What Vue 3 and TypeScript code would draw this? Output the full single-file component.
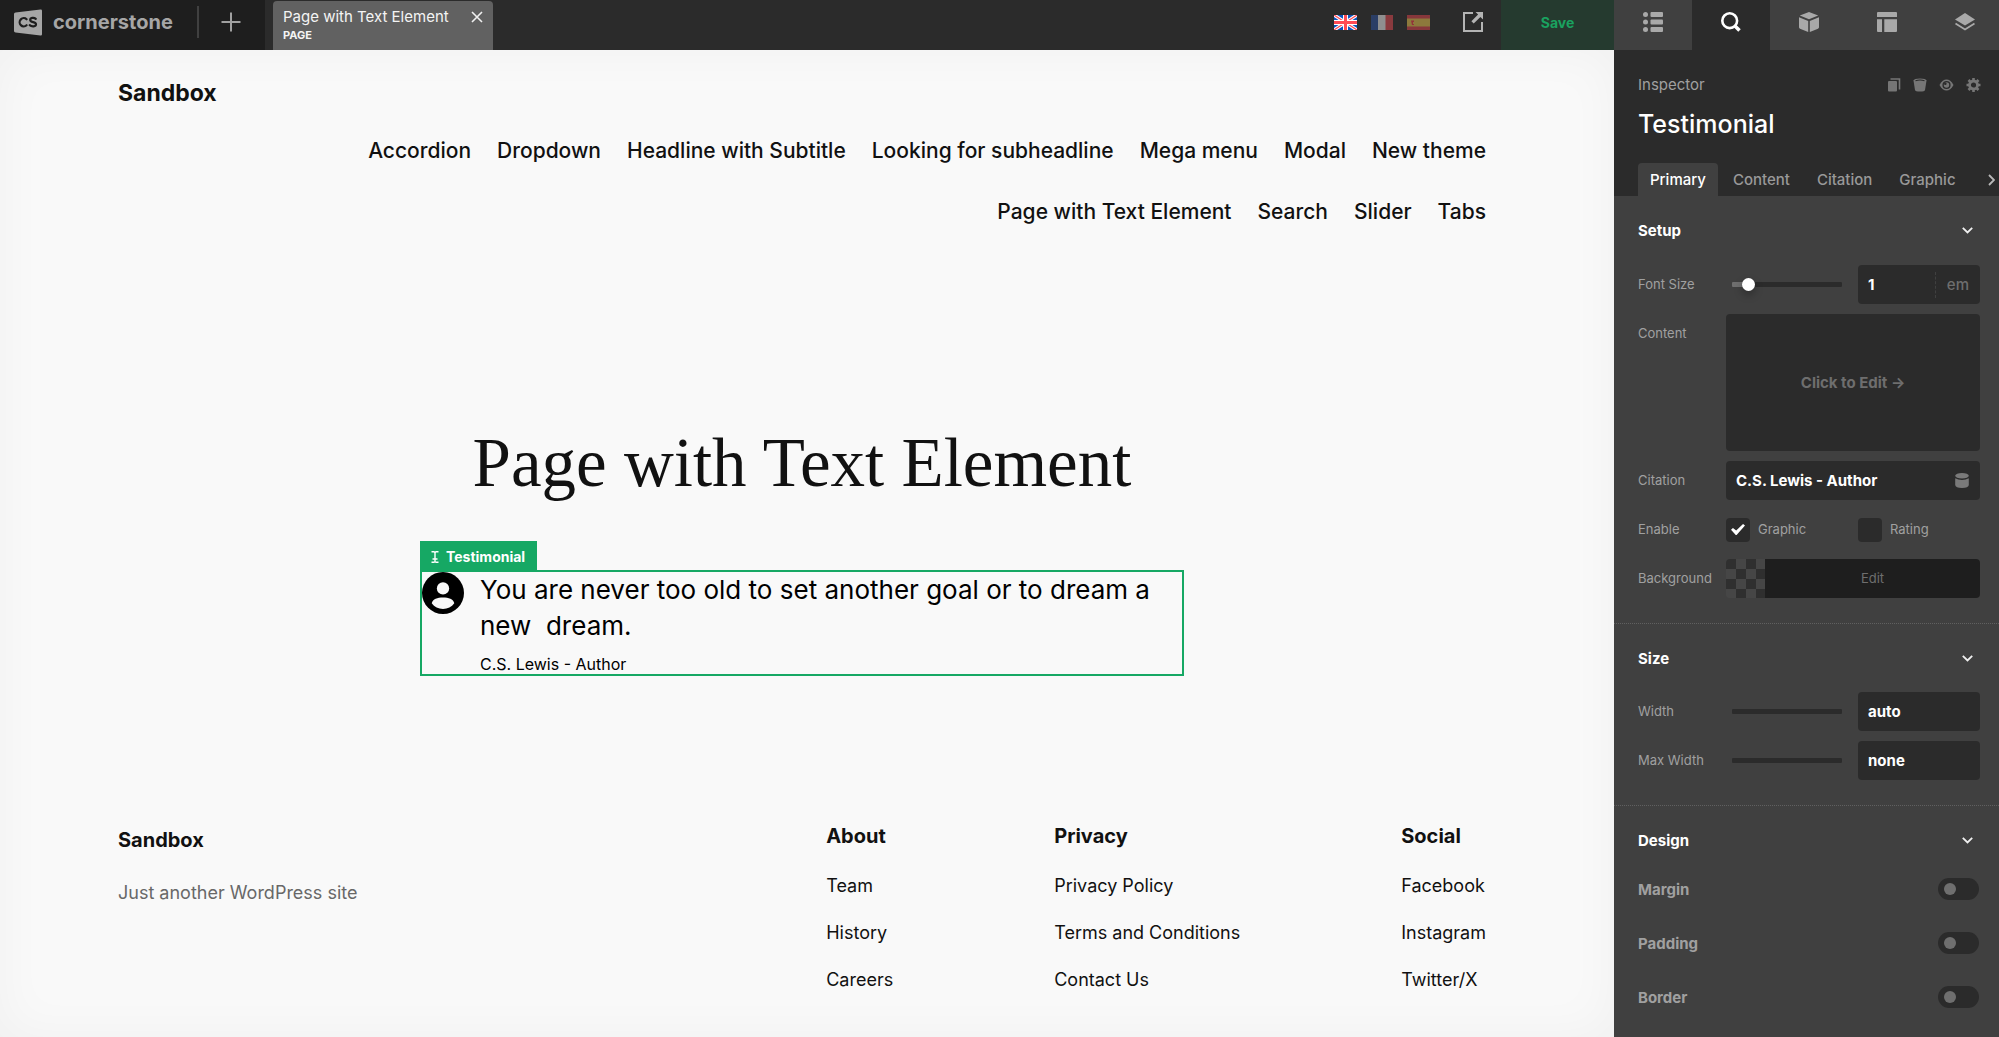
<script setup lang="ts">
import { ref } from 'vue'

const navItems: string[] = [
  'Accordion', 'Dropdown', 'Headline with Subtitle', 'Looking for subheadline',
  'Mega menu', 'Modal', 'New theme', 'Page with Text Element', 'Search', 'Slider', 'Tabs',
]

const footerColumns: { title: string; links: string[] }[] = [
  { title: 'About', links: ['Team', 'History', 'Careers'] },
  { title: 'Privacy', links: ['Privacy Policy', 'Terms and Conditions', 'Contact Us'] },
  { title: 'Social', links: ['Facebook', 'Instagram', 'Twitter/X'] },
]

const inspectorTabs: string[] = ['Primary', 'Content', 'Citation', 'Graphic']
const activeTab = ref('Primary')

const fontSize = ref('1')
const fontScale = ref(10)
const citation = ref('C.S. Lewis - Author')
const showGraphic = ref(true)
const showRating = ref(false)

const sizeRows = ref([
  { id: 'width', label: 'Width', value: 'auto' },
  { id: 'max-width', label: 'Max Width', value: 'none' },
])

const designRows = ref([
  { id: 'margin', label: 'Margin', on: false },
  { id: 'padding', label: 'Padding', on: false },
  { id: 'border', label: 'Border', on: false },
])
</script>

<template>
  <div class="app">
    <div class="workspace">
      <header class="topbar">
        <div class="brand-area">
          <a href="#" class="brand">
            <svg class="brand-mark" width="28" height="27" viewBox="0 0 28 27">
              <path d="M1.500 3.500 26.500 0.400Q28 0.200 28 1.700V25.300Q28 26.800 26.500 26.600L1.500 23.500Q0 23.300 0 22V5Q0 3.700 1.500 3.500Z" fill="#a6a6a6" />
              <g fill="none" stroke="#1e1e1e" stroke-width="2.200" stroke-linecap="round">
                <path d="M12.600 10.300A4.100 4.100 0 1 0 12.600 16.200" />
                <path d="M21.800 9.800C19.800 8.200 16.200 8.700 16.200 11C16.200 14 22 12.300 22 15.300C22 17.800 17.800 18 15.700 16.200" />
              </g>
            </svg>
            <span class="brand-name">cornerstone</span>
          </a>
          <span class="brand-divider"></span>
          <button type="button" class="icon-button add" aria-label="Add">
            <svg width="20" height="20" viewBox="0 0 20 20"><path d="M10 0.500v19M0.500 10h19" stroke="#a0a0a0" stroke-width="2" fill="none" /></svg>
          </button>
        </div>

        <div class="doc-tab">
          <div class="doc-text">
            <span class="doc-title">Page with Text Element</span>
            <span class="doc-kind">PAGE</span>
          </div>
          <button type="button" class="icon-button" aria-label="Close tab">
            <svg width="12" height="12" viewBox="0 0 12 12"><path d="M1 1l10 10M11 1L1 11" stroke="#f0f0f0" stroke-width="1.600" fill="none" /></svg>
          </button>
        </div>

        <div class="top-actions">
          <button type="button" class="icon-button" aria-label="English">
            <svg width="23" height="15" viewBox="0 0 23 15">
              <rect width="23" height="15" fill="#0a54c0" />
              <path d="M0 0l23 15M23 0L0 15" stroke="#fff" stroke-width="3.400" />
              <path d="M0 0l23 15M23 0L0 15" stroke="#ff4b55" stroke-width="1.200" />
              <path d="M11.500 0v15M0 7.500h23" stroke="#fff" stroke-width="5" />
              <path d="M11.500 0v15M0 7.500h23" stroke="#ff4b55" stroke-width="3" />
            </svg>
          </button>
          <button type="button" class="icon-button" aria-label="Français">
            <svg width="22" height="15" viewBox="0 0 22 15">
              <rect width="8" height="15" fill="#2b3e66" />
              <rect x="7" width="8" height="15" fill="#8f8f8f" />
              <rect x="14.500" width="7.500" height="15" fill="#8a3a3e" />
            </svg>
          </button>
          <button type="button" class="icon-button" aria-label="Español">
            <svg width="23" height="15" viewBox="0 0 23 15">
              <rect width="23" height="15" fill="#87373b" />
              <rect y="3.500" width="23" height="8" fill="#8d793c" />
              <path d="M4 5.500h3v1.500h-1v2h1v1H5Z" fill="#94323a" />
            </svg>
          </button>
          <button type="button" class="icon-button external" aria-label="Open in new window">
            <svg width="20" height="20" viewBox="0 0 20 20">
              <path d="M10 1H1v18h18v-9" fill="none" stroke="#b4b4b4" stroke-width="2" />
              <path d="M12.500 0H20v7.500l-2.600-2.600-6.700 6.700-2.300-2.300 6.700-6.700Z" fill="#b4b4b4" />
            </svg>
          </button>
          <button type="button" class="save">Save</button>
        </div>
      </header>

      <main class="canvas">
        <header class="site-header">
          <a href="#" class="site-name">Sandbox</a>
          <nav class="site-nav">
            <a v-for="item in navItems" :key="item" href="#">{{ item }}</a>
          </nav>
        </header>

        <h1 class="page-title">Page with Text Element</h1>

        <section class="testimonial">
          <span class="element-tag">
            <svg width="8" height="12" viewBox="0 0 8 12" fill="none" stroke="#fff">
              <path d="M0.500 0.700h2.500l1 .8 1-.8h2.500M0.500 11.300h2.500l1-.8 1 .8h2.500M4 1v10M1.500 8h5" stroke-width="1.400" />
            </svg>
            Testimonial
          </span>
          <svg class="avatar" width="42" height="42" viewBox="0 0 41 41">
            <circle cx="20.500" cy="20.500" r="20.500" fill="#000" />
            <circle cx="20.500" cy="16" r="6" fill="#f9f9f9" />
            <path d="M9.500 30.500C10.500 26.500 15 25 20.500 25S30.500 26.500 31.500 30.500C29 34 25 36 20.500 36S12 34 9.500 30.500Z" fill="#f9f9f9" />
          </svg>
          <div class="quote">
            <p>You are never too old to set another goal or to dream a new&nbsp; dream.</p>
            <cite>C.S. Lewis - Author</cite>
          </div>
        </section>

        <footer class="site-footer">
          <div class="footer-brand">
            <a href="#" class="footer-name">Sandbox</a>
            <p>Just another WordPress site</p>
          </div>
          <nav v-for="col in footerColumns" :key="col.title" class="footer-col">
            <h2>{{ col.title }}</h2>
            <a v-for="link in col.links" :key="link" href="#">{{ link }}</a>
          </nav>
        </footer>
      </main>
    </div>

    <aside class="sidebar">
      <nav class="modes">
        <button type="button" aria-label="Outline">
          <svg width="20" height="20" viewBox="0 0 20 20" fill="#a9a9a9">
            <circle cx="2.500" cy="2.500" r="2.500" /><circle cx="2.500" cy="10" r="2.500" /><circle cx="2.500" cy="17.500" r="2.500" />
            <rect x="7.500" width="12.500" height="5" rx="1" /><rect x="7.500" y="7.500" width="12.500" height="5" rx="1" /><rect x="7.500" y="15" width="12.500" height="5" rx="1" />
          </svg>
        </button>
        <button type="button" class="current" aria-label="Inspector">
          <svg width="20" height="20" viewBox="0 0 20 20" fill="none" stroke="#fff">
            <circle cx="8.700" cy="8.700" r="7.400" stroke-width="2.600" />
            <path d="M14 14l4.500 4.500" stroke-width="3.600" />
          </svg>
        </button>
        <button type="button" aria-label="Elements">
          <svg width="20" height="20" viewBox="0 0 20 20" fill="#a9a9a9">
            <path d="M10 0l9.200 3.600L10 7.200.8 3.600ZM0 5.300l9.200 3.700v11L1 16.700Q0 16.300 0 15.300ZM20 5.300v10Q20 16.300 19 16.700L10.800 20V9Z" />
          </svg>
        </button>
        <button type="button" aria-label="Templates">
          <svg width="20" height="20" viewBox="0 0 20 20" fill="#a9a9a9">
            <path d="M1 0h18q1 0 1 1v4H0V1Q0 0 1 0ZM0 7.300h5V20H1q-1 0-1-1ZM7.300 7.300H20V19q0 1-1 1H7.300Z" />
          </svg>
        </button>
        <button type="button" aria-label="Layers">
          <svg width="20" height="18" viewBox="0 0 20 18">
            <path d="M10 0l10 6.500L10 12.500 0 6.500Z" fill="#a9a9a9" />
            <path d="M0.500 10.500l9.500 6 9.500-6" fill="none" stroke="#a9a9a9" stroke-width="1.800" />
          </svg>
        </button>
      </nav>

      <div class="inspector-head">
        <div class="crumb-row">
          <span class="crumb">Inspector</span>
          <div class="head-icons">
            <button type="button" class="icon-button" aria-label="Duplicate">
              <svg width="14" height="14" viewBox="0 0 14 14"><rect x="1" y="3" width="9" height="10.500" rx="1" fill="#767676" /><path d="M3.500 1h9v10.500" fill="none" stroke="#767676" stroke-width="1.600" /></svg>
            </button>
            <button type="button" class="icon-button" aria-label="Delete">
              <svg width="14" height="14" viewBox="0 0 14 14"><path d="M0.500 2.500Q1 0.500 7 0.500T13.500 2.500L12 12Q11.700 13.500 7 13.500T2 12Z" fill="#767676" /><path d="M2.500 2.800Q7 1.200 11.500 2.800" stroke="#2b2b2b" fill="none" stroke-width="1.200" /></svg>
            </button>
            <button type="button" class="icon-button" aria-label="Visibility">
              <svg width="15" height="14" viewBox="0 0 15 14"><path d="M0.500 7C2.500 3 5 1.500 7.500 1.500S12.500 3 14.500 7C12.500 11 10 12.500 7.500 12.500S2.500 11 .5 7Z" fill="#767676" /><circle cx="7.500" cy="7" r="3.400" fill="none" stroke="#2b2b2b" stroke-width="1.400" /><circle cx="6.300" cy="5.800" r="1.300" fill="#2b2b2b" /></svg>
            </button>
            <button type="button" class="icon-button" aria-label="Settings">
              <svg width="15" height="14" viewBox="0 0 14 14"><circle cx="7" cy="7" r="4" fill="none" stroke="#767676" stroke-width="2.800" /><path d="M7 0v3M7 11v3M0 7h3M11 7h3M2 2l2 2M10 10l2 2M2 12l2-2M10 4l2-2" stroke="#767676" stroke-width="2.600" /></svg>
            </button>
          </div>
        </div>
        <h2 class="element-title">Testimonial</h2>
        <div class="tabs" role="tablist">
          <button
            v-for="tab in inspectorTabs"
            :key="tab"
            type="button"
            role="tab"
            :aria-selected="tab === activeTab"
            :class="{ selected: tab === activeTab }"
            @click="activeTab = tab"
          >{{ tab }}</button>
          <button type="button" class="more" aria-label="More tabs">
            <svg width="7" height="12" viewBox="0 0 7 12"><path d="M1 1l5 5-5 5" fill="none" stroke="#b8b8b8" stroke-width="1.800" /></svg>
          </button>
        </div>
      </div>

      <section class="group">
        <button type="button" class="group-head">
          Setup
          <svg width="11" height="7" viewBox="0 0 11 7"><path d="M0.800 0.800l4.700 4.700L10.200 0.800" fill="none" stroke="#f0f0f0" stroke-width="1.800" /></svg>
        </button>
        <div class="rows">
          <div class="row">
            <label for="font-size">Font Size</label>
            <div class="control">
              <input v-model="fontScale" type="range" class="slider" aria-label="Font size scale" :style="{ '--fill': fontScale + '%' }">
              <div class="field unit-field">
                <input id="font-size" v-model="fontSize" type="text">
                <button type="button" class="unit">em</button>
              </div>
            </div>
          </div>
          <div class="row top">
            <span id="content-label" class="label">Content</span>
            <button type="button" class="edit-content" aria-describedby="content-label">Click to Edit →</button>
          </div>
          <div class="row">
            <label for="citation">Citation</label>
            <div class="field citation-field">
              <input id="citation" v-model="citation" type="text">
              <button type="button" class="icon-button" aria-label="Dynamic content">
                <svg width="14" height="15" viewBox="0 0 14 15" fill="#7a7a7a"><ellipse cx="7" cy="2.800" rx="6.800" ry="2.800" /><path d="M0.200 5.200Q3 7 7 7T13.800 5.200V12Q13.500 15 7 15T.2 12Z" /></svg>
              </button>
            </div>
          </div>
          <div class="row">
            <span class="label">Enable</span>
            <div class="checks">
              <label><input v-model="showGraphic" type="checkbox">Graphic</label>
              <label><input v-model="showRating" type="checkbox">Rating</label>
            </div>
          </div>
          <div class="row">
            <span id="background-label" class="label">Background</span>
            <div class="background">
              <button type="button" class="swatch" aria-label="Background color"></button>
              <button type="button" class="edit-bg" aria-describedby="background-label">Edit</button>
            </div>
          </div>
        </div>
      </section>

      <section class="group">
        <button type="button" class="group-head">
          Size
          <svg width="11" height="7" viewBox="0 0 11 7"><path d="M0.800 0.800l4.700 4.700L10.200 0.800" fill="none" stroke="#f0f0f0" stroke-width="1.800" /></svg>
        </button>
        <div class="rows">
          <div v-for="row in sizeRows" :key="row.id" class="row">
            <label :for="row.id">{{ row.label }}</label>
            <div class="control">
              <input type="range" class="slider empty" value="0" :aria-label="row.label + ' scale'">
              <div class="field unit-field"><input :id="row.id" v-model="row.value" type="text"></div>
            </div>
          </div>
        </div>
      </section>

      <section class="group">
        <button type="button" class="group-head">
          Design
          <svg width="11" height="7" viewBox="0 0 11 7"><path d="M0.800 0.800l4.700 4.700L10.200 0.800" fill="none" stroke="#f0f0f0" stroke-width="1.800" /></svg>
        </button>
        <label v-for="row in designRows" :key="row.id" class="toggle-row">
          {{ row.label }}
          <input v-model="row.on" type="checkbox" role="switch">
        </label>
      </section>
    </aside>
  </div>
</template>

<style>
body {
  margin: 0;
}
</style>

<style scoped>
.app {
  display: flex;
  height: 100vh;
  overflow: hidden;
  font-family: Inter, "Liberation Sans", sans-serif;
  color: #111;
  background: #2b2b2b;
}

.app *,
.app *::before {
  box-sizing: border-box;
}

a {
  color: inherit;
  text-decoration: none;
}

button,
input {
  font: inherit;
  color: inherit;
  border: 0;
  margin: 0;
  padding: 0;
  background: none;
}

svg {
  display: block;
  flex: none;
}

.workspace {
  flex: 1;
  min-width: 0;
  display: flex;
  flex-direction: column;
}

.icon-button {
  display: flex;
  align-items: center;
  justify-content: center;
}

/* Top bar */
.topbar {
  display: flex;
  height: 50px;
  background: #2b2b2b;
}

.brand-area {
  display: flex;
  width: 265px;
  padding: 0 24px 6px 14px;
  align-items: center;
  background: #1e1e1e;
}

.brand {
  display: flex;
  align-items: center;
  gap: 11px;
}

.brand-name {
  font-size: 20px;
  line-height: 24px;
  font-weight: 700;
  color: #a6a6a6;
}

.brand-divider {
  width: 2px;
  height: 32px;
  margin-left: auto;
  background: #404040;
}

.add {
  margin-left: 22px;
}

.doc-tab {
  display: flex;
  justify-content: space-between;
  width: 220px;
  margin: 1px 0 0 8px;
  padding: 6px 10px;
  border-radius: 4px 4px 0 0;
  background: #616161;
  color: #f4f4f4;
}

.doc-text {
  display: flex;
  flex-direction: column;
}

.doc-title {
  font-size: 15px;
  line-height: 20px;
  font-weight: 400;
}

.doc-kind {
  font-size: 11px;
  line-height: 16px;
  font-weight: 700;
}

.doc-tab .icon-button {
  height: 20px;
}

.top-actions {
  display: flex;
  margin-left: auto;
  gap: 14px;
}

.top-actions .icon-button {
  padding-bottom: 6px;
}

.external {
  margin: 0 4px 0 19px;
}

.save {
  width: 113px;
  padding-bottom: 6px;
  font-size: 14px;
  font-weight: 700;
  color: #1aa260;
  background: #253a2f;
}

/* Canvas */
.canvas {
  flex: 1;
  min-height: 0;
  overflow: auto;
  padding: 25px 128px 0 118px;
  background: #f9f9f9;
  box-shadow: inset 0 0 50px rgba(0, 0, 0, 0.04);
}

.site-name {
  display: block;
  font-size: 23px;
  line-height: 36px;
  font-weight: 700;
}

.site-nav {
  display: flex;
  flex-wrap: wrap;
  justify-content: flex-end;
  width: 84%;
  margin: 9px 0 0 auto;
  gap: 0 26px;
}

.site-nav a {
  font-size: 21px;
  line-height: 61px;
  font-weight: 500;
}

.page-title {
  margin: 177px 0 0;
  font-family: "Liberation Serif", serif;
  font-size: 69px;
  line-height: 88px;
  font-weight: 400;
  text-align: center;
}

.testimonial {
  position: relative;
  display: flex;
  align-items: flex-start;
  gap: 16px;
  max-width: 764px;
  margin: 63px auto 0;
  border: 2px solid #16a864;
  color: #000;
}

.element-tag {
  position: absolute;
  left: -2px;
  bottom: 100%;
  display: flex;
  align-items: center;
  gap: 7px;
  height: 31px;
  padding: 0 12px 0 11px;
  font-size: 14px;
  font-weight: 700;
  color: #fff;
  background: #16a864;
}

.quote p {
  margin: 0;
  font-size: 26px;
  line-height: 36px;
}

.quote cite {
  display: block;
  margin-top: 10px;
  font-size: 16px;
  line-height: 20px;
  font-style: normal;
}

.site-footer {
  display: flex;
  gap: 161px;
  margin-top: 144px;
}

.footer-brand {
  margin-right: auto;
  padding-top: 4px;
}

.footer-name {
  font-size: 20px;
  line-height: 32px;
  font-weight: 700;
}

.footer-brand p {
  margin: 22px 0 0;
  font-size: 18px;
  line-height: 30px;
  color: #686868;
}

.footer-col {
  display: flex;
  flex-direction: column;
}

.footer-col h2 {
  margin: 0 0 10px;
  font-size: 20px;
  line-height: 32px;
  font-weight: 700;
}

.footer-col a {
  font-size: 18px;
  line-height: 47px;
}

/* Sidebar */
.sidebar {
  flex: none;
  width: 385px;
  background: #404040;
  color: #a0a0a0;
  overflow: hidden auto;
}

.modes {
  display: flex;
  height: 50px;
}

.modes button {
  display: flex;
  flex: 0 0 78px;
  align-items: center;
  justify-content: center;
  padding-bottom: 6px;
}

.modes .current {
  background: #2b2b2b;
}

.inspector-head {
  height: 146px;
  padding: 23px 0 0 24px;
  background: #2b2b2b;
}

.crumb-row {
  display: flex;
  justify-content: space-between;
  align-items: center;
  padding-right: 18px;
}

.crumb {
  font-size: 15px;
  line-height: 24px;
}

.head-icons {
  display: flex;
  gap: 12px;
}

.element-title {
  margin: 9px 0 0;
  font-size: 25px;
  line-height: 36px;
  font-weight: 500;
  color: #fff;
}

.tabs {
  display: flex;
  gap: 3px;
  margin-top: 21px;
}

.tabs button {
  height: 33px;
  padding: 0 12px;
  border-radius: 4px 4px 0 0;
  font-size: 15px;
  font-weight: 500;
  color: #999;
}

.tabs .selected {
  color: #fff;
  background: #404040;
}

.tabs .more {
  margin-left: auto;
  padding: 0 4px 0 0;
}

.group + .group {
  border-top: 1px dotted #606060;
}

.group-head {
  display: flex;
  align-items: center;
  justify-content: space-between;
  width: 100%;
  height: 69px;
  padding: 0 26px 0 24px;
  font-size: 15px;
  font-weight: 700;
  color: #fff;
}

.group + .group .group-head {
  height: 68px;
}

.rows {
  display: flex;
  flex-direction: column;
  gap: 10px;
  padding: 0 19px 25px 24px;
}

.row {
  display: grid;
  grid-template-columns: 88px minmax(0, 1fr);
  align-items: center;
  min-height: 39px;
  font-size: 13px;
  line-height: 39px;
  font-weight: 400;
}

.row.top {
  align-items: start;
}

.control {
  display: flex;
  align-items: center;
  justify-content: space-between;
  padding-left: 6px;
}

.slider {
  appearance: none;
  width: 110px;
  height: 14px;
}

.slider::-webkit-slider-runnable-track {
  height: 5px;
  border-radius: 1px;
  background: linear-gradient(to right, #6f6f6f var(--fill, 0%), #2b2b2b var(--fill, 0%));
}

.slider::-webkit-slider-thumb {
  appearance: none;
  width: 13px;
  height: 13px;
  margin-top: -4px;
  border-radius: 50%;
  background: #fff;
  box-shadow: 0 4px 8px rgba(0, 0, 0, 0.3);
}

.slider.empty::-webkit-slider-thumb {
  opacity: 0;
}

.field {
  display: flex;
  align-items: center;
  height: 39px;
  padding: 0 11px 0 10px;
  border-radius: 4px;
  background: #2b2b2b;
}

.field input {
  flex: 1;
  width: 0;
  min-width: 0;
  font-size: 15px;
  line-height: 20px;
  font-weight: 700;
  color: #fff;
}

.unit-field {
  width: 122px;
}

.unit {
  padding-left: 11px;
  border-left: 1px dashed #404040;
  font-size: 15px;
  line-height: 26px;
  font-weight: 500;
  color: #6e6e6e;
}

.edit-content {
  height: 137px;
  border-radius: 4px;
  font-size: 15px;
  font-weight: 700;
  color: #6e6e6e;
  background: #2b2b2b;
}

.checks {
  display: flex;
}

.checks label {
  display: flex;
  flex: none;
  align-items: center;
  gap: 8px;
  width: 132px;
}

.checks label:last-child {
  width: auto;
}

.checks input {
  appearance: none;
  display: grid;
  place-items: center;
  width: 24px;
  height: 24px;
  border-radius: 4px;
  background: #2b2b2b;
}

.checks input:checked::before {
  content: "";
  width: 14px;
  height: 11px;
  background: #fff;
  clip-path: polygon(0 52%, 14% 36%, 37% 58%, 86% 0, 100% 14%, 40% 100%, 34% 100%);
}

.background {
  display: flex;
  height: 39px;
  border-radius: 4px;
  overflow: hidden;
}

.swatch {
  width: 39px;
  background: repeating-conic-gradient(#2f2f2f 0 25%, #464646 0 50%) 0 10px / 20px 20px;
}

.edit-bg {
  flex: 1;
  color: #6e6e6e;
  background: #1e1e1e;
}

.toggle-row {
  display: flex;
  align-items: center;
  justify-content: space-between;
  height: 54px;
  padding: 0 20px 0 24px;
  font-size: 15px;
  font-weight: 700;
}

.group-head + .toggle-row {
  margin-top: -12px;
}

.toggle-row input {
  appearance: none;
  display: flex;
  align-items: center;
  width: 41px;
  height: 22px;
  padding: 0 6px;
  border-radius: 11px;
  background: #2b2b2b;
}

.toggle-row input::before {
  content: "";
  width: 12px;
  height: 12px;
  border-radius: 50%;
  background: #6f6f6f;
}
</style>
